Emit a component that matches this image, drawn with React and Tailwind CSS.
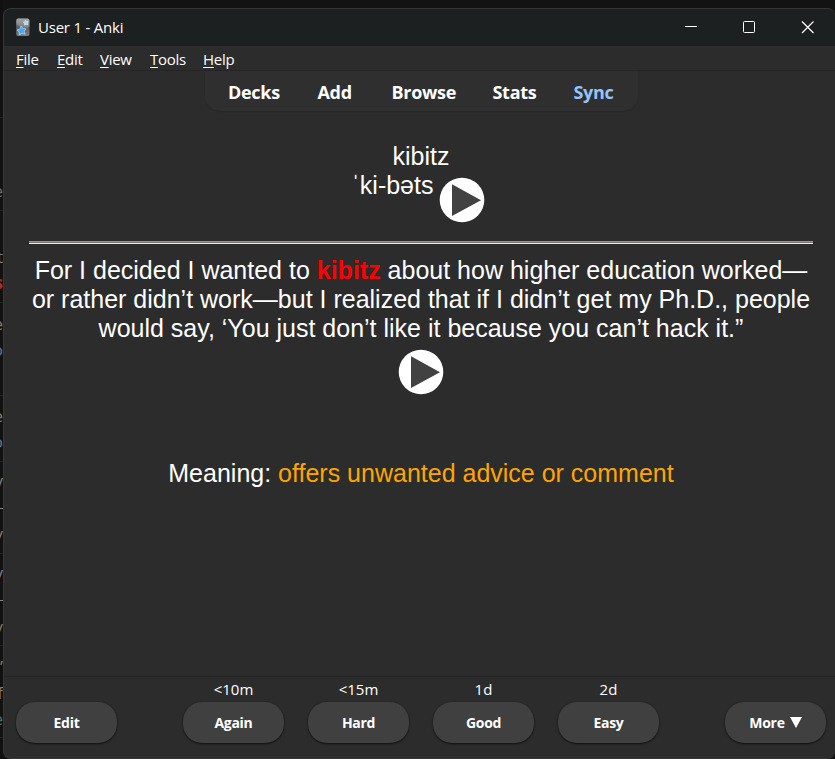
import React from "react";

const behind = [
  { box: "h-[118px]", line: "border-[#252525]", text: [] },
  { box: "h-[93px] pt-[60px]", line: "border-[#252525]", text: [["e", "text-[#66707a]"]] },
  { box: "h-[92px] pt-[33px]", line: "border-[#252525]", text: [["t", "text-[#788088]"], ["s", "text-[#b02828] font-bold"]] },
  { box: "h-[93px] pt-[8px]", line: "border-[#252525]", text: [["e", "text-[#7d7d76]"], ["o", "text-[#6c7490]"]] },
  { box: "h-[66px] pt-[7px]", line: "border-[#252525]", text: [["e", "text-[#7d7d76]"], ["o", "text-[#6c7490]"]] },
  { box: "h-[47px] pt-[6px]", line: "border-[#858585]", text: [["v", "text-[#788088]"]] },
  { box: "h-[45px] pt-[15px]", line: "border-[#252525]", text: [["/", "text-[#8a8070]"]] },
  { box: "h-[47px] pt-[6px]", line: "border-[#858585]", text: [["v", "text-[#788088]"]] },
  { box: "h-[45px] pt-[16px]", line: "border-[#252525]", text: [["/", "text-[#8a8070]"]] },
  { box: "h-[92px] pt-[8px]", line: "border-[#252525]", text: [["’", "text-[#8a7a60]"], ["f", "text-[#8a8070]"], ["e", "text-[#4a7078]"]] },
];

function DesktopEdge() {
  return (
    <div className="w-[3px] shrink-0 overflow-hidden bg-[#111111] text-[17px] leading-[26px]">
      {behind.map((row, i) => (
        <div key={i} className={`flex flex-col items-end border-b ${row.box} ${row.line}`}>
          {row.text.map(([ch, color], j) => (
            <span key={j} className={`h-[26px] shrink-0 ${color}`}>{ch}</span>
          ))}
        </div>
      ))}
    </div>
  );
}

function AnkiIcon() {
  return (
    <svg width="16" height="20" viewBox="0 0 16 20">
      <defs>
        <linearGradient id="card" x1="0" y1="0" x2="0" y2="1">
          <stop offset="0" stopColor="#a0a0a0" />
          <stop offset=".5" stopColor="#5c5c5c" />
          <stop offset="1" stopColor="#808080" />
        </linearGradient>
      </defs>
      <rect x="1.2" y="0.500" width="13.3" height="17.5" rx="2" fill="url(#card)" />
      <path d="M1.5 6.5Q8 12 14.5 9V3Q14 .5 12 .5H3Q1.5 1 1.500 3Z" fill="#aaa" opacity=".45" />
      <path d="M6.2 8 7.900 10.600 11 10.800 9.300 13.300 10.100 16.200 7 15.200 4.300 16.900 4.200 13.900 2 12 4.900 11Z" fill="#45a8f4" stroke="#b5dcfa" strokeWidth=".7" />
      <path d="M10.500 2.300 11.300 3.700 13.200 3.600 12.300 5.100 12.900 6.700 11.200 6.200 9.700 7.100 9.600 5.400 8.300 4.300 9.900 3.900Z" fill="#9fd4fb" stroke="#d8edfd" strokeWidth=".8" />
    </svg>
  );
}

function PlayIcon() {
  return (
    <svg width="46" height="46" viewBox="0 0 46 46" className="shrink-0">
      <circle cx="23" cy="23" r="22.300" fill="#fff" />
      <path d="M13 7.200 42 23.300 13 39Z" fill="#414141" />
    </svg>
  );
}

function TitleBar() {
  return (
    <div className="flex h-[37px] shrink-0 items-center bg-[#1d2021] pl-[11px] pr-[4px] text-white">
      <AnkiIcon />
      <span className="ml-[7px] grow text-[15px] tracking-[-0.22px]">User 1 - Anki</span>
      <svg width="150" height="37" viewBox="0 0 150 37" fill="none" stroke="#fff">
        <path d="M4 17.500H16" />
        <rect x="62.500" y="12.500" width="11" height="11" rx="1" />
        <path d="M121 12.500 132.500 24M132.500 12.500 121 24" strokeWidth="1.200" />
      </svg>
    </div>
  );
}

const menus = [
  ["F", "ile", "w-[41px]"],
  ["E", "dit", "w-[43px]"],
  ["V", "iew", "w-[50px]"],
  ["T", "ools", "w-[53px]"],
  ["H", "elp", "w-[40px]"],
];

function MenuBar() {
  return (
    <div className="flex h-[25px] shrink-0 items-center border-b border-[#252525] pl-[12px] pt-[2px] text-[15px] tracking-[-0.3px] text-white">
      {menus.map(([key, rest, width]) => (
        <span key={key} className={width}>
          <span className="underline underline-offset-[2px]">{key}</span>
          {rest}
        </span>
      ))}
    </div>
  );
}

const links = [
  ["Decks", "w-[89.500px]", "text-white"],
  ["Add", "w-[74px]", "text-white"],
  ["Browse", "w-[101px]", "text-white"],
  ["Stats", "w-[81px]", "text-white"],
  ["Sync", "w-[50px]", "text-[#93c5fd]"],
];

function Toolbar() {
  return (
    <div className="ml-[201px] flex h-[40px] w-[433px] shrink-0 items-center rounded-b-[15px] bg-[#2f2f2f] pl-[23px] pt-[3px] text-[18px] font-bold tracking-[-0.3px] shadow-[0_1px_1px_#272727]">
      {links.map(([name, width, color]) => (
        <span key={name} className={`${width} ${color}`}>{name}</span>
      ))}
    </div>
  );
}

function Card() {
  return (
    <div className="flex grow flex-col items-center whitespace-nowrap pl-[2px] pt-[31px] font-['Liberation_Sans',Arial,sans-serif] text-[25px] leading-[29px] text-white">
      <div className="pl-[1px]">kibitz</div>
      <div className="flex h-[70px] items-start">
        <span className="w-[81px] text-right">ˈki-bəts</span>
        <span className="ml-[6px] mr-[5px] mt-[6px]"><PlayIcon /></span>
      </div>
      <div className="flex h-[3px] w-[784px] flex-col">
        <div className="h-px bg-[#9a9696]" />
        <div className="h-px bg-[#777474]" />
        <div className="h-px bg-[#eeeeee]" />
      </div>
      <div className="mt-[12px] pl-[1px]">
        For I decided I wanted to <b className="text-[#ff0000]">kibitz</b> about how higher education worked—
      </div>
      <div className="pl-[1px]">or rather didn’t work—but I realized that if I didn’t get my Ph.D., people</div>
      <div className="pl-[1px]">would say, ‘You just don’t like it because you can’t hack it.”</div>
      <div className="mt-[6px]"><PlayIcon /></div>
      <div className="mt-[64px] pl-[1px]">
        Meaning: <span className="text-[#ffa500]">offers unwanted advice or comment</span>
      </div>
    </div>
  );
}

function Action({ time, label }) {
  return (
    <div className="flex w-[101px] flex-col items-center">
      <span className="h-[25px] text-[15px] leading-[24px]">{time}</span>
      <button className="h-[41px] w-full rounded-[19px] bg-[#404040] text-[14px] font-bold tracking-[-0.3px] shadow-[0_1px_2px_#111,0_0_1px_#202020]">
        {label}
      </button>
    </div>
  );
}

function BottomBar() {
  return (
    <div className="flex h-[82px] shrink-0 justify-between border-t border-[#252525] pl-[12px] pr-[9px] text-white">
      <Action label="Edit" />
      <div className="flex gap-[24px]">
        <Action time="<10m" label="Again" />
        <Action time="<15m" label="Hard" />
        <Action time="1d" label="Good" />
        <Action time="2d" label="Easy" />
      </div>
      <Action
        label={
          <span className="inline-flex items-center gap-[5px]">
            More
            <svg width="12" height="11" viewBox="0 0 12 11"><path d="M0 0H12L6 11Z" fill="#fff" /></svg>
          </span>
        }
      />
    </div>
  );
}

export default function App() {
  return (
    <div className="flex h-[759px] w-[835px] overflow-hidden bg-[#131313] font-['Open_Sans','Noto_Sans',sans-serif]">
      <DesktopEdge />
      <div className="mt-[8px] flex h-[751px] w-[832px] shrink-0 flex-col overflow-hidden rounded-[8px] border border-r-0 border-[#373737] bg-[#2c2c2c]">
        <TitleBar />
        <MenuBar />
        <Toolbar />
        <Card />
        <BottomBar />
      </div>
    </div>
  );
}
